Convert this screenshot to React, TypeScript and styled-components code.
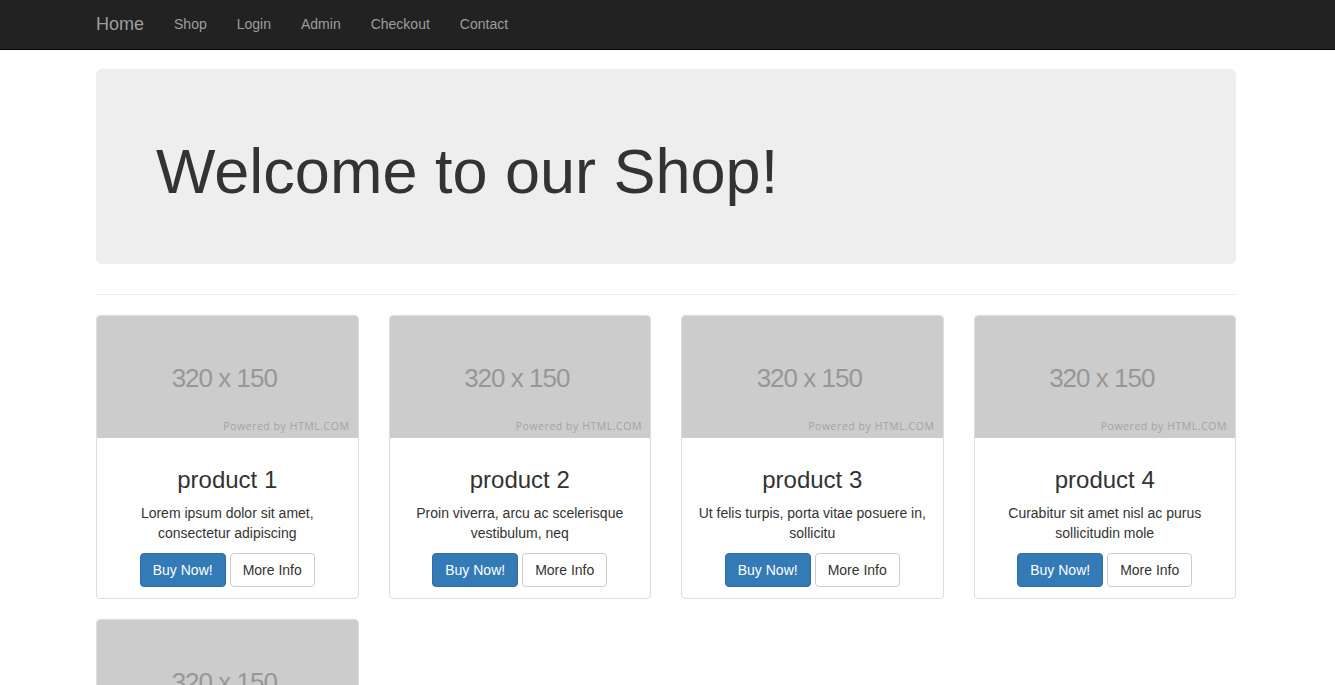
import React from "react";
import styled, { createGlobalStyle } from "styled-components";

const Global = createGlobalStyle`
  html, body { margin: 0; padding: 0; background: #fff; }
  body {
    font-family: "Liberation Sans", Arial, Helvetica, sans-serif;
    font-size: 14px;
    line-height: 1.42857143;
    color: #333;
  }
  * { box-sizing: border-box; }
`;

const Navbar = styled.nav`
  height: 50px;
  background: #222;
  border-bottom: 1px solid #080808;
`;

const NavInner = styled.div`
  width: 1170px;
  margin-left: 81px;
  padding: 0 15px;
  display: flex;
  align-items: stretch;
  height: 49px;
`;

const Brand = styled.a`
  font-size: 18px;
  line-height: 20px;
  padding: 14px 15px 15px 0;
  color: #9d9d9d;
  text-decoration: none;
`;

const NavLink = styled.a`
  font-size: 14px;
  line-height: 20px;
  padding: 14px 15px 15px;
  color: #9d9d9d;
  text-decoration: none;
`;

const Container = styled.main`
  width: 1170px;
  margin-left: 81px;
  padding: 19px 15px 0;
`;

const Jumbotron = styled.section`
  background: #eee;
  border-radius: 6px;
  padding: 48px 60px;
  margin-bottom: 30px;
`;

const Heading = styled.h1`
  margin: 20px 0 10px;
  font-size: 63px;
  font-weight: 500;
  line-height: 1.1;
  color: #333;
`;

const Rule = styled.hr`
  margin: 0 0 20px;
  border: 0;
  border-top: 1px solid #eee;
`;

const Grid = styled.div`
  display: grid;
  grid-template-columns: repeat(4, 1fr);
  column-gap: 30px;
  row-gap: 20px;
`;

const Thumbnail = styled.div`
  border: 1px solid #ddd;
  border-radius: 4px;
  overflow: hidden;
  background: #fff;
`;

const Placeholder = styled.div`
  position: relative;
  height: 122px;
  background: #ccc;
  display: flex;
  align-items: center;
  justify-content: center;
`;

const PlaceholderText = styled.span`
  font-family: "Liberation Sans", Arial, sans-serif;
  font-size: 26px;
  letter-spacing: -1px;
  color: #979797;
  margin-top: 3px;
  margin-right: 6px;
`;

const Powered = styled.span`
  position: absolute;
  right: 8px;
  bottom: 6px;
  font-family: "Open Sans", "DejaVu Sans", sans-serif;
  font-size: 10.5px;
  line-height: 12px;
  letter-spacing: 0.55px;
  color: #a3a3a3;
`;

const Caption = styled.div`
  padding: 9px 9px 11px;
  text-align: center;
`;

const Title = styled.h3`
  margin: 20px 0 9px;
  font-size: 24px;
  font-weight: 500;
  line-height: 1.1;
`;

const Desc = styled.p`
  margin: 0 0 10px;
`;

const Buttons = styled.div`
  display: flex;
  justify-content: center;
  gap: 4px;
`;

const Button = styled.a<{ $primary?: boolean }>`
  display: inline-block;
  padding: 6px 12px;
  font-size: 14px;
  line-height: 20px;
  border-radius: 4px;
  border: 1px solid ${(p) => (p.$primary ? "#2e6da4" : "#ccc")};
  background: ${(p) => (p.$primary ? "#337ab7" : "#fff")};
  color: ${(p) => (p.$primary ? "#fff" : "#333")};
  text-decoration: none;
`;

const products = [
  { name: "product 1", desc: "Lorem ipsum dolor sit amet, consectetur adipiscing" },
  { name: "product 2", desc: "Proin viverra, arcu ac scelerisque vestibulum, neq" },
  { name: "product 3", desc: "Ut felis turpis, porta vitae posuere in, sollicitu" },
  { name: "product 4", desc: "Curabitur sit amet nisl ac purus sollicitudin mole" },
  { name: "product 5", desc: "Vestibulum ante ipsum primis in faucibus orci luctus" },
];

export default function App() {
  return (
    <>
      <Global />
      <Navbar>
        <NavInner>
          <Brand href="#">Home</Brand>
          <NavLink href="#">Shop</NavLink>
          <NavLink href="#">Login</NavLink>
          <NavLink href="#">Admin</NavLink>
          <NavLink href="#">Checkout</NavLink>
          <NavLink href="#">Contact</NavLink>
        </NavInner>
      </Navbar>
      <Container>
        <Jumbotron>
          <Heading>Welcome to our Shop!</Heading>
        </Jumbotron>
        <Rule />
        <Grid>
          {products.map((p) => (
            <Thumbnail key={p.name}>
              <Placeholder>
                <PlaceholderText>320 x 150</PlaceholderText>
                <Powered>Powered by HTML.COM</Powered>
              </Placeholder>
              <Caption>
                <Title>{p.name}</Title>
                <Desc>{p.desc}</Desc>
                <Buttons>
                  <Button $primary href="#">Buy Now!</Button>
                  <Button href="#">More Info</Button>
                </Buttons>
              </Caption>
            </Thumbnail>
          ))}
        </Grid>
      </Container>
    </>
  );
}
